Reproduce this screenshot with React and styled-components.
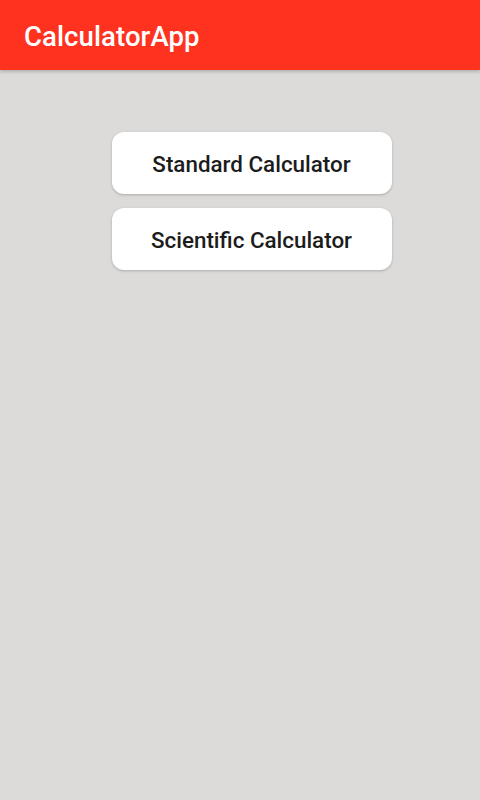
import React from "react";
import styled, { createGlobalStyle } from "styled-components";

const Global = createGlobalStyle`
  html, body { margin: 0; padding: 0; }
  body { background: #dcdbd9; font-family: Roboto, "Noto Sans", sans-serif; }
`;

const Page = styled.div`
  width: 480px;
  height: 800px;
  background: #dcdbd9;
  display: flex;
  flex-direction: column;
`;

const AppBar = styled.header`
  height: 70px;
  background: #fe321f;
  display: flex;
  align-items: center;
  padding-left: 24px;
  box-shadow: 0 2px 3px rgba(0, 0, 0, 0.18);
  position: relative;
  z-index: 1;
`;

const Title = styled.h1`
  margin: 0;
  color: #ffffff;
  font-size: 27.5px;
  font-weight: 500;
  letter-spacing: 0.1px;
  padding-top: 2px;
`;

const Content = styled.main`
  display: flex;
  flex-direction: column;
  align-items: center;
  gap: 14px;
  padding-top: 62px;
  padding-left: 23px;
`;

const MenuButton = styled.button`
  width: 280px;
  height: 62px;
  border: none;
  border-radius: 12px;
  background: #ffffff;
  box-shadow: 0 1px 3px rgba(0, 0, 0, 0.22);
  font-family: Roboto, "Noto Sans", sans-serif;
  font-size: 22.4px;
  font-weight: 500;
  color: #1c1c1c;
  padding: 2px 0 0;
  cursor: pointer;
`;

export default function App() {
  return (
    <Page>
      <Global />
      <AppBar>
        <Title>CalculatorApp</Title>
      </AppBar>
      <Content>
        <MenuButton>Standard Calculator</MenuButton>
        <MenuButton>Scientific Calculator</MenuButton>
      </Content>
    </Page>
  );
}
